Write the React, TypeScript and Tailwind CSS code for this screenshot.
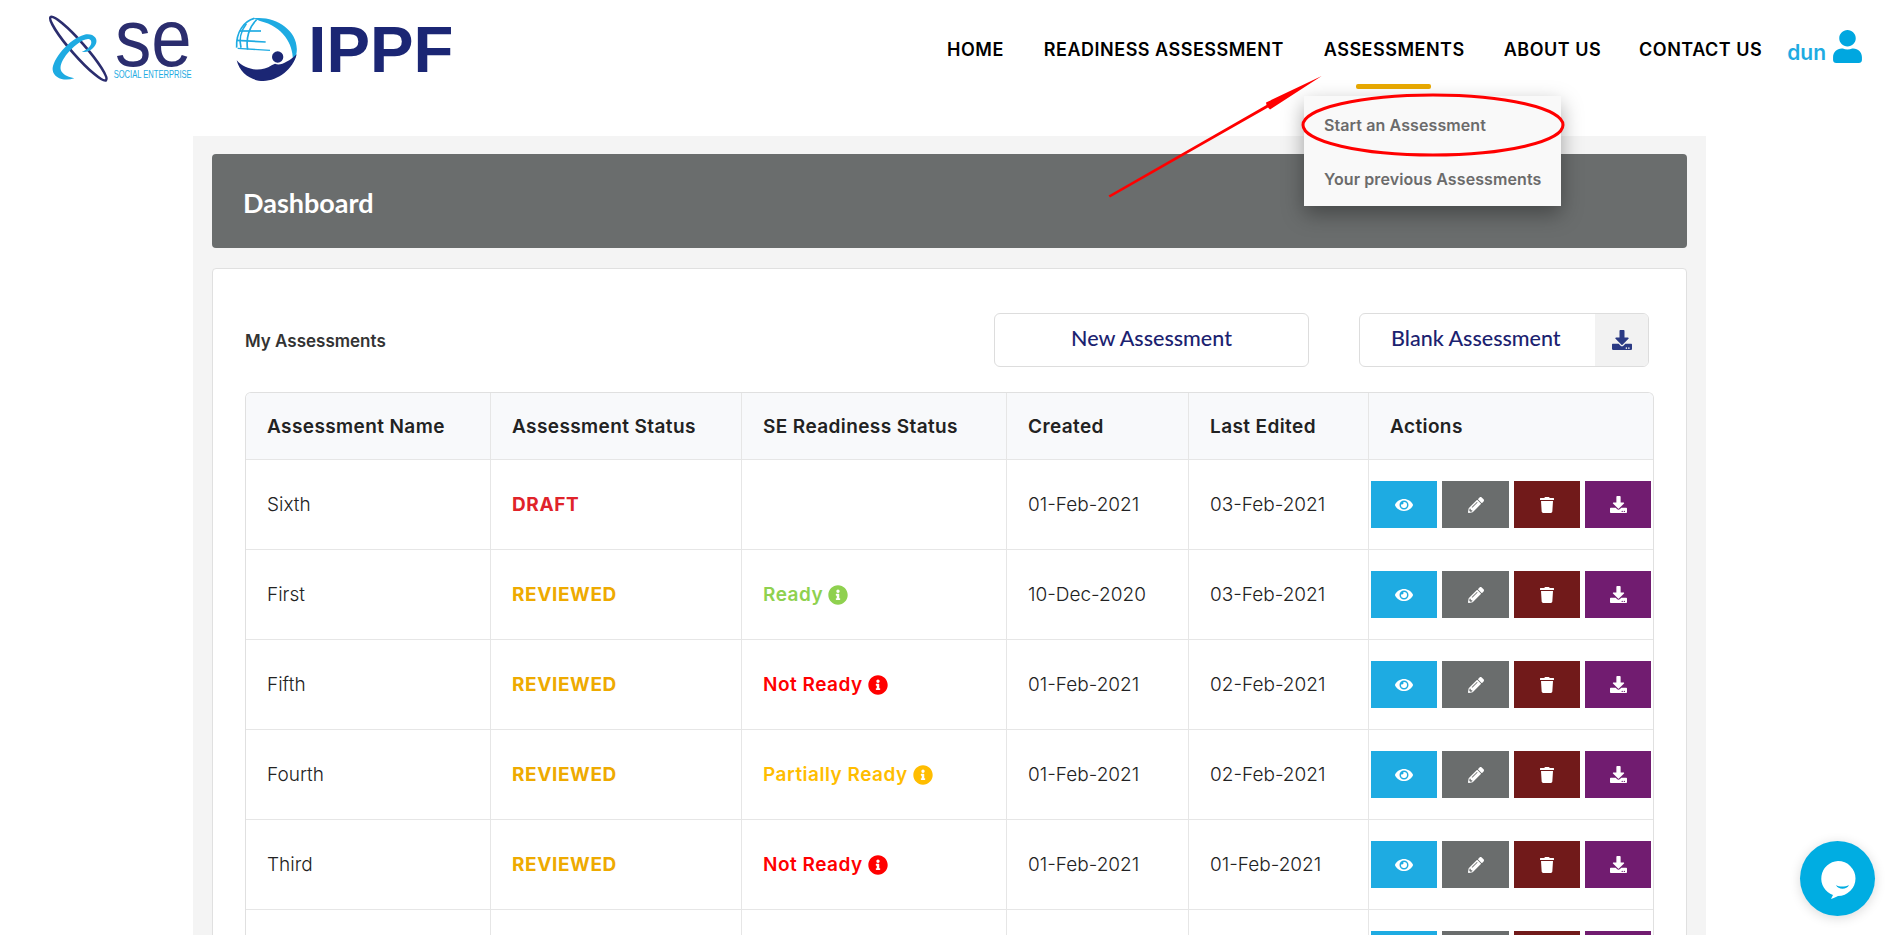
import { FaDownload, FaEye, FaInfoCircle, FaPencilAlt, FaTrash, FaUser } from "react-icons/fa";

const NAV = [
  { label: "HOME", className: "ml-0" },
  { label: "READINESS ASSESSMENT", className: "ml-[40px]" },
  { label: "ASSESSMENTS", className: "ml-[40px]" },
  { label: "ABOUT US", className: "ml-[39px]" },
  { label: "CONTACT US", className: "ml-[38px]" },
];

type Readiness = "ready" | "not" | "partial" | "";

const ROWS: { name: string; status: string; readiness: Readiness; created: string; edited: string }[] = [
  { name: "Sixth", status: "DRAFT", readiness: "", created: "01-Feb-2021", edited: "03-Feb-2021" },
  { name: "First", status: "REVIEWED", readiness: "ready", created: "10-Dec-2020", edited: "03-Feb-2021" },
  { name: "Fifth", status: "REVIEWED", readiness: "not", created: "01-Feb-2021", edited: "02-Feb-2021" },
  { name: "Fourth", status: "REVIEWED", readiness: "partial", created: "01-Feb-2021", edited: "02-Feb-2021" },
  { name: "Third", status: "REVIEWED", readiness: "not", created: "01-Feb-2021", edited: "01-Feb-2021" },
  { name: "Second", status: "REVIEWED", readiness: "ready", created: "01-Feb-2021", edited: "01-Feb-2021" },
];

function SeLogo() {
  return (
    <svg width="142" height="66" viewBox="30 21 426 198" className="block overflow-visible">
      <ellipse cx="112" cy="116" rx="126" ry="20" transform="rotate(48.7 112 116)" fill="none" stroke="#2b2d6e" strokeWidth="8" />
      <path d="M100 205 C 70 215 38 205 35 180 C 32 150 85 85 130 74 C 155 68 175 85 163 105 C 153 122 135 128 122 126 C 140 118 155 105 150 92 C 145 82 125 88 105 105 C 75 130 50 165 62 185 C 70 197 85 200 100 205 Z" fill="#1eabe2" />
      <text x="222" y="168" fill="#2b2d6e" fontFamily="'Liberation Sans', sans-serif" fontSize="243" textLength="230" lengthAdjust="spacingAndGlyphs">se</text>
      <text x="218" y="205" fill="#1eabe2" fontFamily="'Liberation Sans', sans-serif" fontSize="34" textLength="234" lengthAdjust="spacingAndGlyphs">SOCIAL ENTERPRISE</text>
    </svg>
  );
}

function IppfLogo() {
  return (
    <svg width="220" height="65" viewBox="30 20 660 195" className="block overflow-visible">
      <path d="M85 24 C 150 15 222 60 215 125 C 213 140 209 150 203 158 C 208 110 180 50 105 32 Z" fill="#1eabe2" />
      <g fill="none" stroke="#1eabe2" strokeWidth="5">
        <path d="M95 28 C 72 50 62 85 68 118" />
        <path d="M64 40 C 47 62 42 90 48 112" />
        <path d="M44 62 H 108" />
        <path d="M35 90 L 122 95" />
        <path d="M38 114 L 135 120" strokeWidth="4" />
        <path d="M88 24 C 58 32 32 65 35 112" />
      </g>
      <circle cx="158" cy="140" r="17" fill="#1b2674" />
      <path d="M35 150 C 60 178 105 188 140 165 L 150 160 C 165 168 190 155 215 132 C 205 175 160 212 115 212 C 80 212 45 190 35 150 Z" fill="#1b2674" />
      <text x="250" y="185" fill="#1b2674" fontFamily="'Liberation Sans', sans-serif" fontWeight="700" fontSize="195" textLength="435" lengthAdjust="spacingAndGlyphs">IPPF</text>
    </svg>
  );
}

function ReadinessLabel({ value }: { value: Readiness }) {
  if (!value) return null;
  const map = {
    ready: { text: "Ready", color: "text-[#8fd14f]" },
    not: { text: "Not Ready", color: "text-[#ff0000]" },
    partial: { text: "Partially Ready", color: "text-[#ffbd00]" },
  };
  const item = map[value];
  return (
    <span className={`inline-flex items-center gap-[5px] font-semibold tracking-[0.5px] ${item.color}`}>
      {item.text}
      <FaInfoCircle className="-mt-[2px] text-[20px]" />
    </span>
  );
}

function Actions() {
  return (
    <div className="flex gap-[5px] pl-[2px] text-white">
      <button className="flex h-[47px] w-[66px] items-center justify-center bg-[#1eabe2]"><FaEye className="text-[18px]" /></button>
      <button className="flex h-[47px] w-[67px] items-center justify-center bg-[#6a6d6d]"><FaPencilAlt className="text-[16px]" /></button>
      <button className="flex h-[47px] w-[66px] items-center justify-center bg-[#711a1a]"><FaTrash className="text-[16px]" /></button>
      <button className="flex h-[47px] w-[66px] items-center justify-center bg-[#711c70]"><FaDownload className="text-[17px]" /></button>
    </div>
  );
}

const thClass = "h-[67px] border-r border-b border-[#e6e6e6] bg-[#f8f9fb] pl-[21px] pt-[2px] text-left font-semibold tracking-[0.4px] text-[#222]";
const tdClass = "h-[90px] border-r border-b border-[#e6e6e6] pl-[21px] pt-[2px] font-light text-[#222]";

export default function App() {
  return (
    <div className="relative h-[935px] overflow-hidden bg-white font-['Inter',sans-serif]">
      {/* Header */}
      <header className="flex h-[136px] items-start pl-[51px] pt-[17px]">
        <SeLogo />
        <div className="ml-[42px]"><IppfLogo /></div>
        <nav className="ml-auto flex items-center pr-[25px] pt-[14px] text-[18px] font-semibold tracking-[0.5px] text-black">
          {NAV.map((n) => (
            <a key={n.label} className={`whitespace-nowrap ${n.className}`}>{n.label}</a>
          ))}
          <span className="ml-[25px] mt-[6px] text-[21px] font-semibold tracking-normal text-[#1eabe2]">dun</span>
          <FaUser className="ml-[5px] -mt-[7px] text-[33px] text-[#00a7e0]" />
        </nav>
      </header>

      {/* Main panel */}
      <main className="ml-[193px] w-[1513px] bg-[#f4f4f4] px-[19px] pt-[18px] pb-[40px]">
        <div className="flex h-[94px] items-center rounded-[4px] bg-[#6a6d6d] pl-[31px] pt-[5px] font-['Lato',sans-serif] text-[27px] font-bold text-white">
          Dashboard
        </div>

        <section className="mt-[20px] rounded-[4px] border border-[#e0e0e0] bg-white px-[32px] pt-[44px]">
          <div className="flex items-center">
            <h2 className="pt-[3px] text-[17px] font-semibold text-[#333]">My Assessments</h2>
            <button className="ml-auto h-[54px] w-[315px] rounded-[6px] border border-[#dddddd] pb-[3px] font-['Lato',sans-serif] text-[21.5px] font-medium text-[#1b2270]">
              New Assessment
            </button>
            <div className="ml-[50px] mr-[5px] flex h-[54px] w-[290px] overflow-hidden rounded-[6px] border border-[#dddddd] font-['Lato',sans-serif]">
              <div className="flex flex-1 items-center pb-[3px] pl-[31px] text-[21.5px] font-medium text-[#1b2270]">Blank Assessment</div>
              <div className="flex w-[53px] items-center justify-center bg-[#f2f2f2] text-[#2b3a84]">
                <FaDownload className="text-[20px]" />
              </div>
            </div>
          </div>

          <div className="mt-[25px] overflow-hidden rounded-t-[6px] border border-b-0 border-[#e0e0e0]">
            <table className="w-full table-fixed border-separate border-spacing-0 text-[19px]">
              <colgroup>
                <col className="w-[245px]" />
                <col className="w-[251px]" />
                <col className="w-[265px]" />
                <col className="w-[182px]" />
                <col className="w-[180px]" />
                <col className="w-[284px]" />
              </colgroup>
              <thead>
                <tr>
                  <th className={thClass}>Assessment Name</th>
                  <th className={thClass}>Assessment Status</th>
                  <th className={thClass}>SE Readiness Status</th>
                  <th className={thClass}>Created</th>
                  <th className={thClass}>Last Edited</th>
                  <th className={`${thClass} border-r-0`}>Actions</th>
                </tr>
              </thead>
              <tbody>
                {ROWS.map((r) => (
                  <tr key={r.name}>
                    <td className={tdClass}>{r.name}</td>
                    <td className={`${tdClass} !font-bold tracking-[0.6px] ${r.status === "DRAFT" ? "!text-[#e0232a]" : "!text-[#eeaa00]"}`}>{r.status}</td>
                    <td className={tdClass}><ReadinessLabel value={r.readiness} /></td>
                    <td className={tdClass}>{r.created}</td>
                    <td className={tdClass}>{r.edited}</td>
                    <td className="h-[90px] border-b border-[#e6e6e6]"><Actions /></td>
                  </tr>
                ))}
              </tbody>
            </table>
          </div>
        </section>
      </main>

      {/* Assessments menu, open */}
      <div className="absolute left-[1356px] top-[84px] h-[5px] w-[75px] rounded-[2px] bg-[#e9a900]" />
      <div className="absolute left-[1304px] top-[96px] h-[110px] w-[257px] bg-[#f9f9f9] pl-[20px] text-[16px] font-semibold tracking-[0.1px] text-[#6b6b6b] shadow-[0_8px_20px_rgba(0,0,0,0.35)]">
        <div className="flex h-[58px] items-center">Start an Assessment</div>
        <div className="flex h-[52px] items-center pb-[2px]">Your previous Assessments</div>
      </div>

      {/* Red annotation drawn over the page */}
      <svg className="pointer-events-none absolute left-0 top-0" width="1889" height="935">
        <ellipse cx="1433" cy="125" rx="130" ry="30" fill="none" stroke="#ff0000" strokeWidth="3" />
        <path d="M1108.5 195.5 L1266.5 105 L1266 102.5 L1321.7 76 L1270 109.5 L1268 107.5 L1110 197.5 Z" fill="#ff0000" />
      </svg>

      {/* Chat bubble */}
      <button className="absolute left-[1800px] top-[841px] flex h-[75px] w-[75px] items-center justify-center rounded-full bg-[#00ade2] shadow-[0_2px_12px_rgba(0,0,0,0.15)]">
        <svg width="40" height="40" viewBox="0 0 40 40">
          <path d="M20 2 A17.5 17.5 0 0 1 20 37 C 18 38 16 39 13 40 L15 36 A17.5 17.5 0 0 1 20 2 Z" fill="#fff" />
          <path d="M18 26 C 21 28 27 28 31 26 C 29 31 20 31 18 26 Z" fill="#00ade2" />
        </svg>
      </button>
    </div>
  );
}
